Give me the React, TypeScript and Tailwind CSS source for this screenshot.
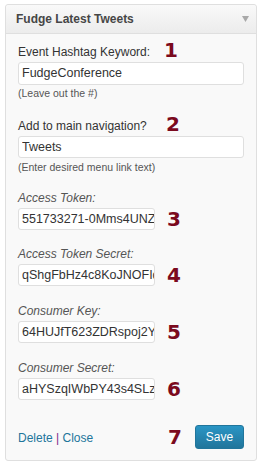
import React from "react";

const NUM = "font-['DejaVu_Sans',sans-serif] font-bold text-[20px] leading-none text-[#7b0a1e]";

function Small({ label, value, n }: { label: string; value: string; n: string }) {
  return (
    <div>
      <div className="h-[15px] leading-[15px] text-[12px] italic text-[#555]">{label}</div>
      <div className="mt-[2px] flex items-center">
        <input
          readOnly
          value={value}
          className="w-[137px] h-[22px] bg-white border border-[#dfdfdf] rounded-[3px] pl-[3px] text-[12.5px] text-[#333] outline-none font-['Liberation_Sans',Arial,sans-serif]"
        />
        <span className={"ml-[12px] " + NUM}>{n}</span>
      </div>
    </div>
  );
}

export default function App() {
  return (
    <div className="w-[265px] h-[471px] bg-white pl-[5px] pt-[4px] font-['Liberation_Sans',Arial,sans-serif]">
      <div className="w-[252px] border border-[#dfdfdf] rounded-[3px] bg-[#f9f9f9]">
        <div className="h-[29px] flex items-center justify-between pl-[10px] pr-[7px] border-b border-[#dfdfdf] rounded-t-[3px] bg-gradient-to-b from-[#f9f9f9] to-[#ececec]">
          <span className="text-[12px] font-bold text-[#464646]">Fudge Latest Tweets</span>
          <svg width="7" height="6" viewBox="0 0 7 6">
            <polygon points="0,0 7,0 3.5,6" fill="#a8a8a8" />
          </svg>
        </div>
        <div className="px-[12px] pt-[11px] pb-[11px] flex flex-col">
          <div>
            <div className="relative h-[15px] leading-[15px] text-[12px] text-[#333]">
              Event Hashtag Keyword:
              <span className={"absolute left-[146px] bottom-0 " + NUM}>1</span>
            </div>
            <input
              readOnly
              value="FudgeConference"
              className="w-full h-[23px] bg-white border border-[#dfdfdf] rounded-[3px] pl-[3px] text-[12.5px] text-[#333] outline-none font-['Liberation_Sans',Arial,sans-serif]"
            />
            <div className="mt-[2px] text-[10.5px] leading-[12px] text-[#555]">(Leave out the #)</div>
          </div>
          <div className="mt-[20px]">
            <div className="relative h-[15px] leading-[15px] text-[12px] text-[#333]">
              Add to main navigation?
              <span className={"absolute left-[148px] bottom-0 " + NUM}>2</span>
            </div>
            <input
              readOnly
              value="Tweets"
              className="mt-[1px] w-full h-[22px] bg-white border border-[#dfdfdf] rounded-[3px] pl-[3px] text-[12.5px] text-[#333] outline-none font-['Liberation_Sans',Arial,sans-serif]"
            />
            <div className="mt-[3px] text-[10.5px] leading-[12px] text-[#555]">(Enter desired menu link text)</div>
          </div>
          <div className="mt-[18px]">
            <Small label="Access Token:" value="551733271-0Mms4UNZkq8" n="3" />
          </div>
          <div className="mt-[17px]">
            <Small label="Access Token Secret:" value="qShgFbHz4c8KoJNOFIdx" n="4" />
          </div>
          <div className="mt-[18px]">
            <Small label="Consumer Key:" value="64HUJfT623ZDRspoj2Yw" n="5" />
          </div>
          <div className="mt-[18px]">
            <Small label="Consumer Secret:" value="aHYSzqIWbPY43s4SLzQx" n="6" />
          </div>
          <div className="mt-[25px] flex items-center justify-between">
            <div className="pt-[4px] text-[12px] leading-[15px]">
              <span className="text-[#21759b]">Delete</span>
              <span className="text-[#7d2a8a]"> | </span>
              <span className="text-[#21759b]">Close</span>
            </div>
            <div className="flex items-center">
              <span className={"mr-[13px] " + NUM}>7</span>
              <button className="w-[49px] h-[24px] rounded-[3px] border border-[#21759b] bg-gradient-to-b from-[#2a95c5] to-[#21759b] text-white text-[12px] leading-none">
                Save
              </button>
            </div>
          </div>
        </div>
      </div>
    </div>
  );
}
